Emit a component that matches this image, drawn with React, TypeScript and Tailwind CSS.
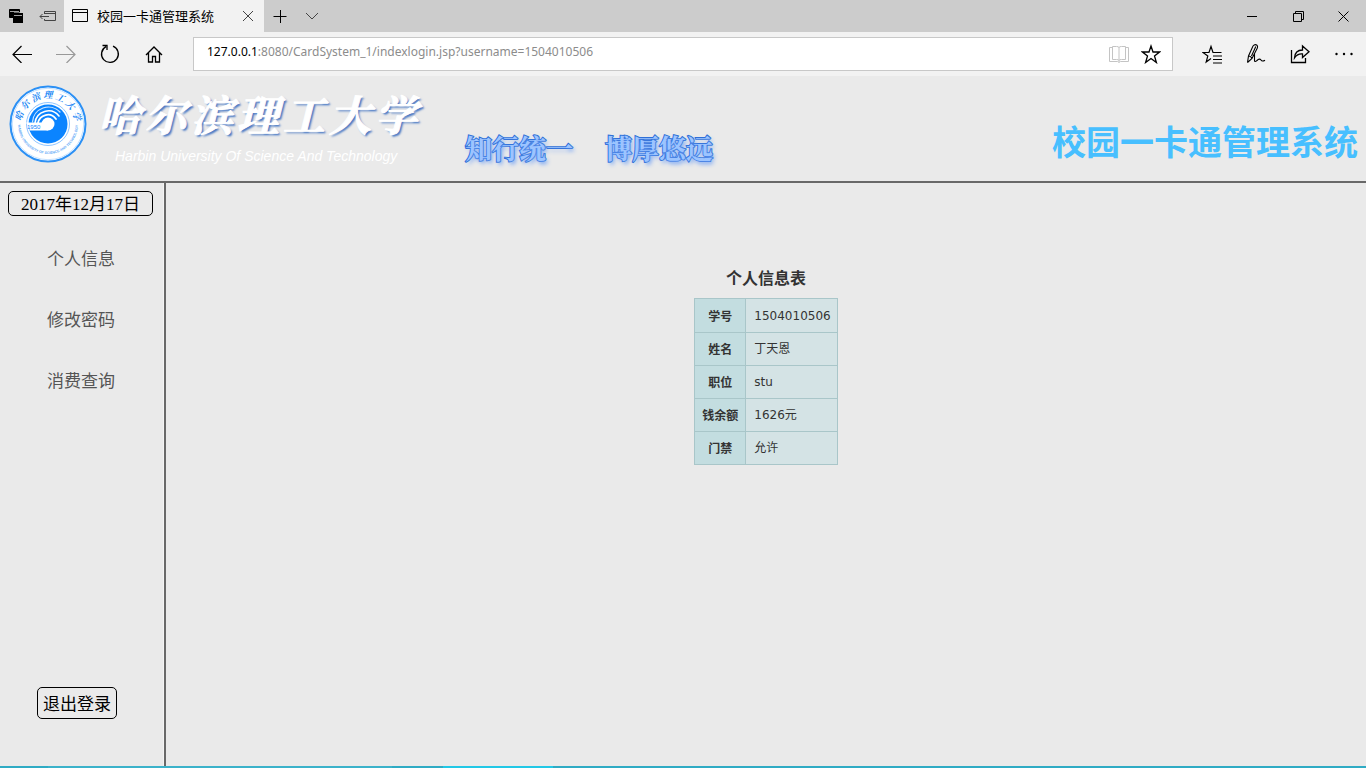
import React from 'react';

const records = [
  ['学号', '1504010506'],
  ['姓名', '丁天恩'],
  ['职位', 'stu'],
  ['钱余额', '1626元'],
  ['门禁', '允许'],
];

const menu = ['个人信息', '修改密码', '消费查询'];

function Icon({ w, h, children, className = '' }: { w: number; h: number; children: React.ReactNode; className?: string }) {
  return (
    <svg width={w} height={h} viewBox={`0 0 ${w} ${h}`} fill="none" stroke="currentColor" strokeWidth="1" className={`block shrink-0 ${className}`} aria-hidden="true">
      {children}
    </svg>
  );
}

function ToolButton({ label, children, className = '' }: { label: string; children: React.ReactNode; className?: string }) {
  return (
    <button type="button" aria-label={label} className={`flex h-9 w-11 shrink-0 items-center justify-center ${className}`}>
      {children}
    </button>
  );
}

function TabBar() {
  return (
    <div className="flex h-8 items-stretch bg-[#cccccc] text-black">
      <button type="button" aria-label="已保存的标签页" className="flex w-8 items-center justify-center">
        <Icon w={16} h={16}>
          <path d="M1.500 1.500h10v2.500h-6v5.500h-4z" fill="currentColor" />
          <path d="M5 5h10v10H5z" fill="currentColor" stroke="none" />
          <path d="M2 3.500h9M6 7.500h8" stroke="#ccc" strokeWidth="0.800" />
        </Icon>
      </button>
      <button type="button" aria-label="搁置标签页" className="flex w-8 items-center justify-center text-[#444]">
        <Icon w={18} h={16}>
          <path d="M5.500 6V3.500h11v9h-11V11M5.500 5.500h11M1 8.500h9M3.500 6L1 8.500l2.500 2.500" />
        </Icon>
      </button>
      <div className="flex w-50 items-center bg-[#f2f2f2] pl-2">
        <Icon w={16} h={16}><path d="M.5 1.500h15v12H.5zM.5 4.500h15" /></Icon>
        <span className="ml-[9px] flex-1 whitespace-nowrap text-[13px]">校园一卡通管理系统</span>
        <button type="button" aria-label="关闭标签页" className="flex h-8 w-8 items-center justify-center text-[#444]">
          <Icon w={12} h={12}><path d="M1 1l10 10M11 1L1 11" /></Icon>
        </button>
      </div>
      <button type="button" aria-label="新建标签页" className="flex w-8 items-center justify-center">
        <Icon w={14} h={14}><path d="M.5 7.500h13M7.500 1v13" /></Icon>
      </button>
      <button type="button" aria-label="标签页预览" className="flex w-8 items-center justify-center text-[#444]">
        <Icon w={14} h={8}><path d="M1 1l6 6 6-6" /></Icon>
      </button>
      <div className="flex-1" />
      <button type="button" aria-label="最小化" className="flex w-12 items-center justify-center">
        <Icon w={10} h={10}><path d="M0 5.500h10" /></Icon>
      </button>
      <button type="button" aria-label="还原" className="flex w-11 items-center justify-center">
        <Icon w={11} h={11}><path d="M.5 2.500h8v8h-8zM2.500 2V.5h8v8H9" /></Icon>
      </button>
      <button type="button" aria-label="关闭" className="flex w-[46px] items-center justify-center">
        <Icon w={11} h={11}><path d="M.5.5l10 10M10.500.5l-10 10" /></Icon>
      </button>
    </div>
  );
}

function AddressBar() {
  return (
    <div className="flex h-11 items-center bg-[#f2f2f2] text-black">
      <ToolButton label="后退"><Icon w={20} h={18}><path d="M1 9.500h19M9.500 1L1 9.500 9.500 18" strokeWidth="1.200" /></Icon></ToolButton>
      <ToolButton label="前进" className="text-[#999]"><Icon w={20} h={18}><path d="M0 9.500h19M10.500 1L19 9.500 10.500 18" strokeWidth="1.200" /></Icon></ToolButton>
      <ToolButton label="刷新">
        <Icon w={20} h={20}><path d="M6 2.600A8.400 8.400 0 1 0 13 2.200M2.500 1.500h4.500v4.500" strokeWidth="1.300" /></Icon>
      </ToolButton>
      <ToolButton label="主页">
        <Icon w={18} h={18}><path d="M1 10L9 2l8 8M3.500 8v9h4v-5.500h3V17h4V8" strokeWidth="1.300" /></Icon>
      </ToolButton>
      <div className="ml-[17px] flex h-[34px] flex-1 items-center border border-[#c8c8c8] bg-white">
        <a href="#top" className="flex-1 whitespace-nowrap pb-1 pl-[13px] font-['Noto_Sans','Noto_Sans_CJK_SC',sans-serif] text-[12px] leading-4 text-[#8c8c8c]">
          <span className="text-black">127.0.0.1</span>:8080/CardSystem_1/indexlogin.jsp?username=1504010506
        </a>
        <button type="button" aria-label="阅读视图" className="flex w-8 items-center justify-center text-[#c4c4c4]">
          <Icon w={20} h={20}><path d="M3.500 3.500h-3v14h8l1.500 1 1.500-1h8v-14h-3M3.500 2.500h4q2.500 0 2.500 1 0-1 2.500-1h4v13h-4q-2.500 0-2.500 1 0-1-2.500-1h-4zM10 3v15" /></Icon>
        </button>
        <button type="button" aria-label="添加到收藏夹" className="mr-[5px] flex w-8 items-center justify-center">
          <Icon w={20} h={20}><path d="M10 2l2 6h6.500l-5 4 1.900 6.500-5.400-4-5.400 4 1.900-6.500-5-4H8z" strokeWidth="1.300" /></Icon>
        </button>
      </div>
      <div className="ml-[17px] flex">
        <ToolButton label="中心">
          <Icon w={20} h={20}><path d="M9 14.500L4.200 18l1.600-6L1 8.500h6L9 2.500l2 6h8.500M11 12h9M11 15.500h9M11 19h9" strokeWidth="1.200" /></Icon>
        </ToolButton>
        <ToolButton label="添加笔记">
          <Icon w={20} h={20}><path d="M1.500 18.500L2.500 12 7 2Q9-.3 11 1.300q1 1 .2 3L6 14.500l-4.500 4M2.500 12q2.500 0 3.500 2.500M9.800 2.500L5.500 12M8.500 10v6.500q0 2 2.500 0 2.500-2.500 4-.5 1.200 2 4 .2" strokeWidth="1.100" /></Icon>
        </ToolButton>
        <ToolButton label="共享">
          <Icon w={20} h={20}><path d="M1.500 6v12.500h14V14M4.500 14q.5-8 8-8V2l6.500 5.800-6.500 5.700V10q-5-.5-8 4z" strokeWidth="1.300" /></Icon>
        </ToolButton>
        <ToolButton label="更多">
          <Icon w={18} h={4}><g fill="currentColor" stroke="none"><circle cx="1.500" cy="2" r="1.200" /><circle cx="9" cy="2" r="1.200" /><circle cx="16.500" cy="2" r="1.200" /></g></Icon>
        </ToolButton>
      </div>
    </div>
  );
}

function Emblem() {
  return (
    <svg viewBox="0 0 78 78" className="h-[78px] w-[78px] shrink-0" role="img" aria-label="哈尔滨理工大学校徽">
      <defs>
        <path id="arcTop" d="M12.500 35A27 27 0 0 1 65.500 35" />
        <path id="arcBottom" d="M9 39A30 30 0 0 0 69 39" />
      </defs>
      <circle cx="39" cy="39" r="37.500" fill="#fff" stroke="#2b90f5" strokeWidth="2" />
      <circle cx="39" cy="39" r="35.700" fill="none" stroke="#c6e2ff" strokeWidth="1" />
      <circle cx="39" cy="39" r="19.500" fill="#0b84ff" />
      <circle cx="39" cy="39" r="21.500" fill="none" stroke="#8fc5ff" strokeWidth="1" />
      <g fill="none" stroke="#fff" strokeLinecap="round">
        <path d="M23.500 37A16 16 0 0 1 51 27" strokeWidth="1.200" opacity="0.800" />
        <path d="M26 38A13.500 13.500 0 0 1 50 31" strokeWidth="1.600" />
        <path d="M29 38A10 10 0 0 1 47 34" strokeWidth="1.800" />
      </g>
      <circle cx="39" cy="39" r="6.500" fill="#fff" />
      <path d="M17 37.500h22v8H21z" fill="#fff" />
      <text x="18" y="43.500" fontSize="6" fill="#0b84ff" fontFamily="Liberation Sans">1950</text>
      <g fill="#1685f5">
        <text fontSize="9" fontWeight="700" fontStyle="italic" fontFamily="Noto Serif CJK SC, Noto Sans CJK SC, serif"><textPath href="#arcTop" startOffset="50%" textAnchor="middle">哈 尔 滨 理 工 大 学</textPath></text>
        <text fontSize="3.500" fontWeight="700" fontFamily="Liberation Sans" opacity="0.700"><textPath href="#arcBottom" startOffset="50%" textAnchor="middle">HARBIN UNIVERSITY OF SCIENCE AND TECHNOLOGY</textPath></text>
      </g>
    </svg>
  );
}

function Banner() {
  return (
    <header className="flex h-[107px] shrink-0 border-b-2 border-[#696969] pl-[9px]">
      <div className="pt-[9px]"><Emblem /></div>
      <div className="ml-3 pt-2">
        <div className="flex gap-1 font-['Noto_Serif_CJK_SC','Noto_Sans_CJK_SC',serif] text-[42px] font-bold italic leading-[58px] text-white [-webkit-text-stroke:1px_#ffffff] [text-shadow:2px_2px_2px_#4878c4]">
          {'哈尔滨理工大学'.split('').map((c) => <span key={c}>{c}</span>)}
        </div>
        <p className="pl-4 pt-1 font-['Liberation_Sans',sans-serif] text-[14px] italic leading-5 text-white">Harbin University Of Science And Technology</p>
      </div>
      <div className="ml-12 flex gap-8 pt-[52px] font-['Noto_Serif_CJK_SC','Noto_Sans_CJK_SC',serif] text-[27px] font-bold leading-10 text-[#9cc4ff] [-webkit-text-stroke:2px_#2f6fd6] [paint-order:stroke_fill] [text-shadow:2px_3px_4px_#6b9df5]">
        <span>知行统一</span>
        <span>博厚悠远</span>
      </div>
      <h1 className="ml-auto pr-2 pt-10 text-[34px] font-bold leading-[50px] text-[#47bfff]">校园一卡通管理系统</h1>
    </header>
  );
}

function Sidebar() {
  return (
    <aside className="flex w-[166px] shrink-0 flex-col border-r-2 border-[#696969] shadow-[inset_-1px_0_0_#f4f4f4]">
      <div className="ml-2 mr-[11px] mt-2 h-[25px] rounded-[5px] border border-black text-center font-['Liberation_Serif','Noto_Sans_CJK_SC',serif] text-[17px] leading-[25px] text-black">
        2017年12月17日
      </div>
      <nav className="mt-[29px] flex flex-col items-center gap-9 pr-0.5 text-[17px] leading-[25px] text-[#555]">
        {menu.map((item) => <a key={item} href="#info">{item}</a>)}
      </nav>
      <button type="button" className="mb-[47px] ml-[37px] mt-auto h-8 w-20 rounded-[5px] border border-black text-[17px] leading-7 text-black">退出登录</button>
    </aside>
  );
}

export default function App() {
  return (
    <div id="top" className="flex min-h-screen flex-col bg-[#eaeaea] font-['Noto_Sans_CJK_SC',sans-serif]">
      <TabBar />
      <AddressBar />
      <Banner />
      <div className="flex flex-1">
        <Sidebar />
        <main id="info" className="flex flex-1 flex-col items-center pt-20">
          <table className="border-collapse text-[12px] leading-4 text-[#333]">
            <caption className="pb-[7px] text-[16px] font-bold leading-7">个人信息表</caption>
            <tbody>
              {records.map(([k, v]) => (
                <tr key={k} className="h-[33px] first:h-[34px]">
                  <th scope="row" className="border border-[#a9c6c9] bg-[#c3dde0] px-[7px] font-bold">{k}</th>
                  <td className="border border-[#a9c6c9] bg-[#d4e3e5] pl-2 pr-1.5 font-['DejaVu_Sans','Noto_Sans_CJK_SC',sans-serif]">{v}</td>
                </tr>
              ))}
            </tbody>
          </table>
        </main>
      </div>
      <div className="flex h-0.5 bg-[#2fabc4]">
        <div className="ml-12 w-[344px] bg-[#3bb2ca]" />
        <div className="ml-[51px] w-[110px] bg-[#22c8e6]" />
      </div>
    </div>
  );
}
